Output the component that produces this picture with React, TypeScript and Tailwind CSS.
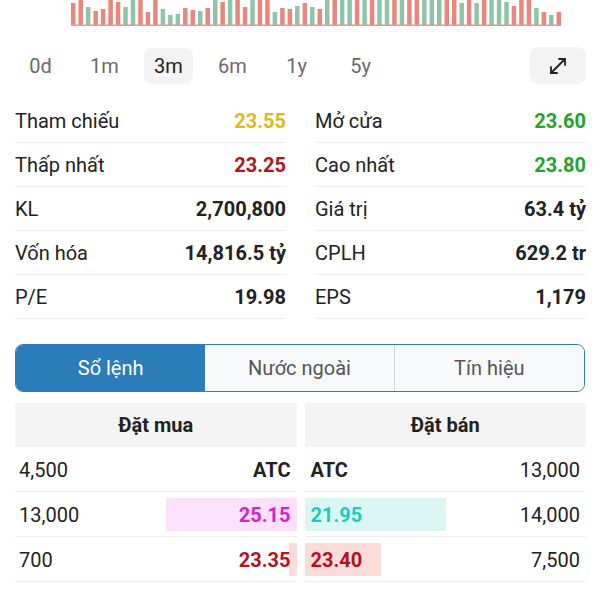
import { MoveDiagonal } from "lucide-react";

const RED = "#e8877c";
const GREEN = "#8fc4aa";

// [color, height] — 30 means the bar runs off the top of the crop
const bars: [string, number][] = [
  ["r", 22], ["r", 30], ["g", 18], ["r", 14], ["r", 16], ["r", 30], ["r", 23], ["g", 18],
  ["g", 30], ["r", 30], ["r", 13], ["r", 30], ["g", 16], ["g", 10], ["g", 11], ["r", 17],
  ["r", 15], ["g", 14], ["r", 17], ["g", 30], ["r", 23], ["g", 30], ["r", 30], ["r", 18],
  ["g", 30], ["r", 30], ["r", 30], ["g", 13], ["r", 17], ["r", 16], ["g", 19], ["r", 22],
  ["g", 18], ["r", 16],
  ["g", 30], ["r", 30], ["g", 30], ["g", 30], ["r", 30], ["g", 30], ["r", 30], ["g", 30],
  ["g", 30], ["r", 30], ["g", 30], ["r", 30], ["r", 30], ["g", 30], ["g", 30], ["g", 30],
  ["r", 30], ["r", 30],
  ["g", 22], ["r", 30], ["g", 22], ["r", 30], ["g", 30], ["g", 30], ["g", 23], ["r", 19],
  ["r", 30], ["r", 30], ["g", 17], ["r", 13], ["g", 10], ["r", 13],
];

function VolumeChart() {
  const pitch = 7.47;
  const w = 4.5;
  const base = 25;
  return (
    <svg width="492" height="27" viewBox="0 0 492 27" className="block">
      {bars.map(([c, h], i) => (
        <rect
          key={i}
          x={i * pitch}
          y={base - h}
          width={w}
          height={h}
          fill={c === "r" ? RED : GREEN}
        />
      ))}
      <rect x="0" y="24.5" width="490" height="1.6" rx="0.8" fill="#e6998e" />
    </svg>
  );
}

const ranges = ["0d", "1m", "3m", "6m", "1y", "5y"];

function RangeBar() {
  return (
    <div className="flex items-center justify-between pl-[16px] pr-[14px] mt-[20px]">
      <div className="flex gap-[15px]">
        {ranges.map((r) => (
          <div
            key={r}
            className={
              r === "3m"
                ? "w-[49px] h-[36px] rounded-lg bg-[#f3f3f3] flex items-center justify-center text-[20px] text-[#222]"
                : "w-[49px] h-[36px] rounded-lg flex items-center justify-center text-[20px] text-[#6b6b6b]"
            }
          >
            {r}
          </div>
        ))}
      </div>
      <div className="w-[56px] h-[37px] rounded-lg bg-[#f3f3f3] flex items-center justify-center">
        <MoveDiagonal size={24} strokeWidth={1.8} color="#222" />
      </div>
    </div>
  );
}

type Stat = { label: string; value: string; color: string };

const leftStats: Stat[] = [
  { label: "Tham chiếu", value: "23.55", color: "text-[#e2b623]" },
  { label: "Thấp nhất", value: "23.25", color: "text-[#b5121b]" },
  { label: "KL", value: "2,700,800", color: "text-[#222]" },
  { label: "Vốn hóa", value: "14,816.5 tỷ", color: "text-[#222]" },
  { label: "P/E", value: "19.98", color: "text-[#222]" },
];

const rightStats: Stat[] = [
  { label: "Mở cửa", value: "23.60", color: "text-[#20a52a]" },
  { label: "Cao nhất", value: "23.80", color: "text-[#20a52a]" },
  { label: "Giá trị", value: "63.4 tỷ", color: "text-[#222]" },
  { label: "CPLH", value: "629.2 tr", color: "text-[#222]" },
  { label: "EPS", value: "1,179", color: "text-[#222]" },
];

function StatColumn({ rows }: { rows: Stat[] }) {
  return (
    <div className="flex flex-col">
      {rows.map((s) => (
        <div
          key={s.label}
          className="h-[44px] flex items-center justify-between border-b border-[#eeeeee] text-[20px]"
        >
          <span className="text-[#222]">{s.label}</span>
          <span className={`font-bold ${s.color}`}>{s.value}</span>
        </div>
      ))}
    </div>
  );
}

function Tabs() {
  return (
    <div className="mx-[15px] mt-[25px] h-[48px] grid grid-cols-3 rounded-lg border border-[#2a7db8] overflow-hidden text-[20px]">
      <div className="bg-[#2a7db8] text-white flex items-center justify-center">Sổ lệnh</div>
      <div className="bg-[#f8f9fa] text-[#555] flex items-center justify-center border-r border-[#d0d4d8]">
        Nước ngoài
      </div>
      <div className="bg-[#f8f9fa] text-[#555] flex items-center justify-center">Tín hiệu</div>
    </div>
  );
}

function OrderBook() {
  return (
    <div className="mx-[15px] mt-[11px] mr-[14px] grid grid-cols-2 gap-x-[8px] text-[20px] text-[#222]">
      <div className="h-[44px] bg-[#f4f4f4] flex items-center justify-center font-bold">Đặt mua</div>
      <div className="h-[44px] bg-[#f4f4f4] flex items-center justify-center font-bold">Đặt bán</div>

      <div className="h-[45px] border-b border-[#eeeeee] flex items-center justify-between pl-[4px] pr-[6px] pt-[2px]">
        <span>4,500</span>
        <span className="font-bold">ATC</span>
      </div>
      <div className="h-[45px] border-b border-[#eeeeee] flex items-center justify-between pl-[6px] pr-[6px] pt-[2px]">
        <span className="font-bold">ATC</span>
        <span>13,000</span>
      </div>

      <div className="relative h-[45px] border-b border-[#eeeeee] flex items-center justify-between pl-[4px] pr-[6px] pt-[2px]">
        <div className="absolute right-0 top-[6px] bottom-[5px] w-[131px] bg-[#fde0fb]" />
        <span className="relative">13,000</span>
        <span className="relative font-bold text-[#d81fcf]">25.15</span>
      </div>
      <div className="relative h-[45px] border-b border-[#eeeeee] flex items-center justify-between pl-[6px] pr-[6px] pt-[2px]">
        <div className="absolute left-0 top-[6px] bottom-[5px] w-[141px] bg-[#d9f6f3]" />
        <span className="relative font-bold text-[#1fc8be]">21.95</span>
        <span className="relative">14,000</span>
      </div>

      <div className="relative h-[45px] border-b border-[#eeeeee] flex items-center justify-between pl-[4px] pr-[6px] pt-[2px]">
        <div className="absolute right-0 top-[6px] bottom-[5px] w-[8px] bg-[#fbdcda]" />
        <span className="relative">700</span>
        <span className="relative font-bold text-[#b5121b]">23.35</span>
      </div>
      <div className="relative h-[45px] border-b border-[#eeeeee] flex items-center justify-between pl-[6px] pr-[6px] pt-[2px]">
        <div className="absolute left-0 top-[6px] bottom-[5px] w-[76px] bg-[#fbdcda]" />
        <span className="relative font-bold text-[#b5121b]">23.40</span>
        <span className="relative">7,500</span>
      </div>
    </div>
  );
}

export default function App() {
  return (
    <div className="w-[600px] h-[600px] bg-white overflow-hidden font-['Roboto',sans-serif]">
      <div className="pl-[71px]">
        <VolumeChart />
      </div>
      <RangeBar />
      <div className="mt-[15px] px-[15px] pr-[14px] grid grid-cols-2 gap-x-[29px]">
        <StatColumn rows={leftStats} />
        <StatColumn rows={rightStats} />
      </div>
      <Tabs />
      <OrderBook />
    </div>
  );
}
